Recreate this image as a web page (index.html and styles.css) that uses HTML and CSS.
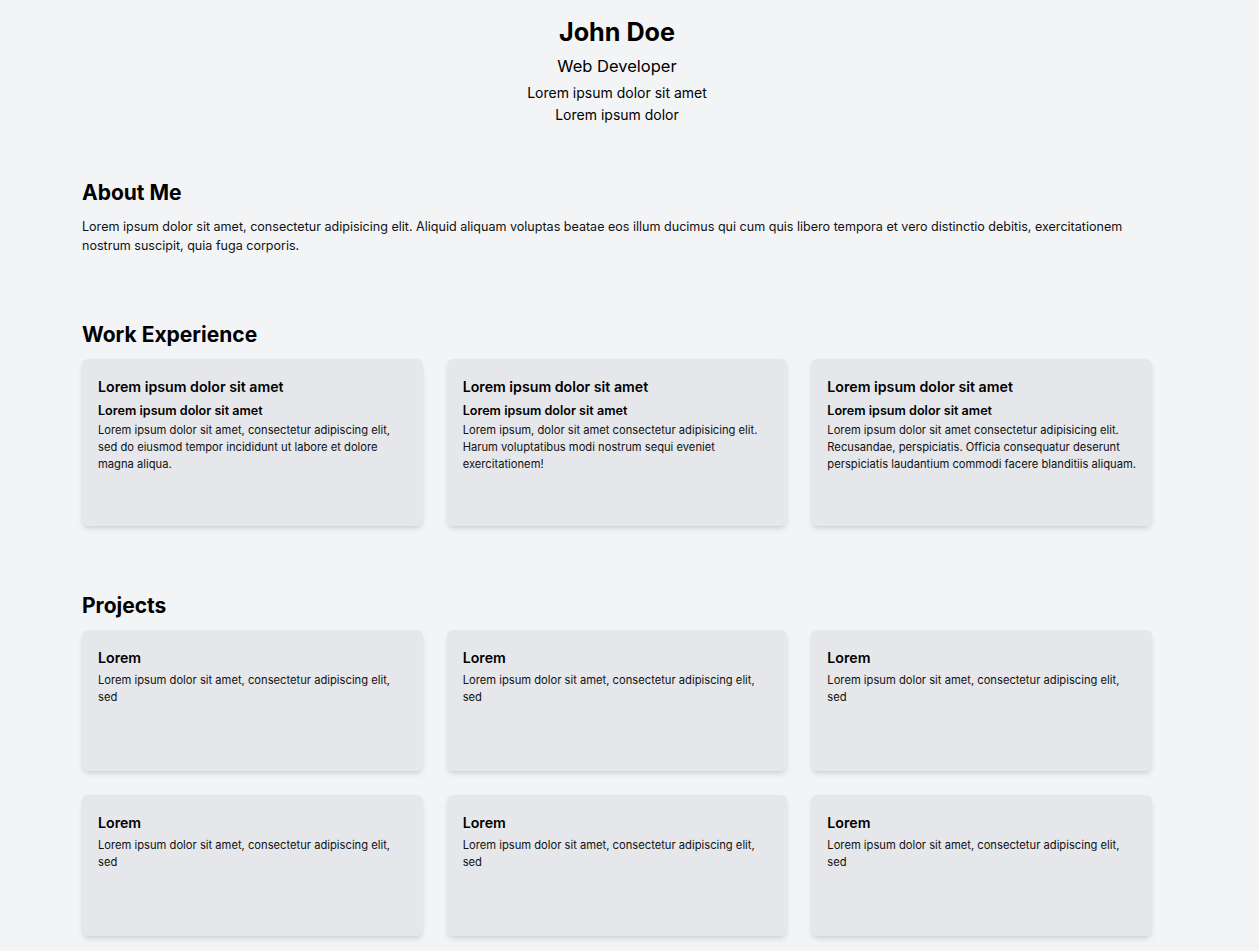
FILE: index.html
```html
<!DOCTYPE html>
<html lang="en">
<head>
<meta charset="utf-8">
<title>John Doe</title>
<link rel="stylesheet" href="styles.css">
</head>
<body>
<div class="page">
  <header class="hero">
    <h1 class="hero-name">John Doe</h1>
    <p class="hero-role">Web Developer</p>
    <p class="hero-line">Lorem ipsum dolor sit amet</p>
    <p class="hero-line">Lorem ipsum dolor</p>
  </header>

  <section class="section section-about">
    <h2 class="section-title">About Me</h2>
    <p class="about-text">Lorem ipsum dolor sit amet, consectetur adipisicing elit. Aliquid aliquam voluptas beatae eos illum ducimus qui cum quis libero tempora et vero distinctio debitis, exercitationem nostrum suscipit, quia fuga corporis.</p>
  </section>

  <section class="section">
    <h2 class="section-title">Work Experience</h2>
    <div class="grid">
      <div class="card card-work">
        <h3 class="card-title">Lorem ipsum dolor sit amet</h3>
        <h4 class="card-sub">Lorem ipsum dolor sit amet</h4>
        <p class="card-text">Lorem ipsum dolor sit amet, consectetur adipiscing elit, sed do eiusmod tempor incididunt ut labore et dolore magna aliqua.</p>
      </div>
      <div class="card card-work">
        <h3 class="card-title">Lorem ipsum dolor sit amet</h3>
        <h4 class="card-sub">Lorem ipsum dolor sit amet</h4>
        <p class="card-text">Lorem ipsum, dolor sit amet consectetur adipisicing elit. Harum voluptatibus modi nostrum sequi eveniet exercitationem!</p>
      </div>
      <div class="card card-work">
        <h3 class="card-title">Lorem ipsum dolor sit amet</h3>
        <h4 class="card-sub">Lorem ipsum dolor sit amet</h4>
        <p class="card-text">Lorem ipsum dolor sit amet consectetur adipisicing elit. Recusandae, perspiciatis. Officia consequatur deserunt perspiciatis laudantium commodi facere blanditiis aliquam.</p>
      </div>
    </div>
  </section>

  <section class="section">
    <h2 class="section-title">Projects</h2>
    <div class="grid">
      <div class="card card-project">
        <h3 class="card-title">Lorem</h3>
        <p class="card-text">Lorem ipsum dolor sit amet, consectetur adipiscing elit, sed</p>
      </div>
      <div class="card card-project">
        <h3 class="card-title">Lorem</h3>
        <p class="card-text">Lorem ipsum dolor sit amet, consectetur adipiscing elit, sed</p>
      </div>
      <div class="card card-project">
        <h3 class="card-title">Lorem</h3>
        <p class="card-text">Lorem ipsum dolor sit amet, consectetur adipiscing elit, sed</p>
      </div>
      <div class="card card-project">
        <h3 class="card-title">Lorem</h3>
        <p class="card-text">Lorem ipsum dolor sit amet, consectetur adipiscing elit, sed</p>
      </div>
      <div class="card card-project">
        <h3 class="card-title">Lorem</h3>
        <p class="card-text">Lorem ipsum dolor sit amet, consectetur adipiscing elit, sed</p>
      </div>
      <div class="card card-project">
        <h3 class="card-title">Lorem</h3>
        <p class="card-text">Lorem ipsum dolor sit amet, consectetur adipiscing elit, sed</p>
      </div>
    </div>
  </section>
</div>
</body>
</html>
```

FILE: styles.css
```css
* {
  box-sizing: border-box;
}

html, body {
  margin: 0;
  padding: 0;
  background: #f3f4f6;
}

body {
  font-family: Inter, "Noto Sans", "Liberation Sans", sans-serif;
  color: #000;
  line-height: 1.5;
}

h1, h2, h3, h4, p {
  margin: 0;
}

.page {
  width: 1070px;
  margin-left: 82px;
  padding-top: 13px;
  padding-bottom: 40px;
}

.hero {
  display: flex;
  flex-direction: column;
  align-items: center;
  text-align: center;
}

.hero-name {
  font-size: 25.2px;
  font-weight: 700;
  line-height: 38px;
}

.hero-role {
  font-size: 16.5px;
  line-height: 24px;
  margin-top: 3px;
}

.hero-line {
  font-size: 14px;
  line-height: 21.6px;
}

.hero-role + .hero-line {
  margin-top: 4px;
}

.section {
  margin-top: 63px;
}

.section-about {
  margin-top: 51px;
}

.section-title {
  font-size: 21px;
  font-weight: 700;
  line-height: 32.4px;
  padding-top: 1px;
  margin-bottom: 7.5px;
}

.about-text {
  font-size: 12.55px;
  line-height: 19px;
  color: #111;
}

.grid {
  display: grid;
  grid-template-columns: repeat(3, 1fr);
  gap: 24px;
}

.card {
  background: #e5e7eb;
  border-radius: 6px;
  padding: 17px 14px 16px 16px;
  box-shadow: 0 4px 6px -1px rgba(0, 0, 0, 0.1), 0 2px 4px -2px rgba(0, 0, 0, 0.1);
}

.card-work {
  height: 167px;
}

.card-project {
  height: 141px;
}

.card-title {
  font-size: 14.2px;
  font-weight: 600;
  line-height: 21.6px;
  margin-bottom: 3.5px;
}

.card-sub {
  font-size: 12.6px;
  font-weight: 600;
  line-height: 19px;
  margin-bottom: 2px;
}

.card-text {
  font-size: 11.2px;
  line-height: 16.8px;
  color: #111;
}
```
